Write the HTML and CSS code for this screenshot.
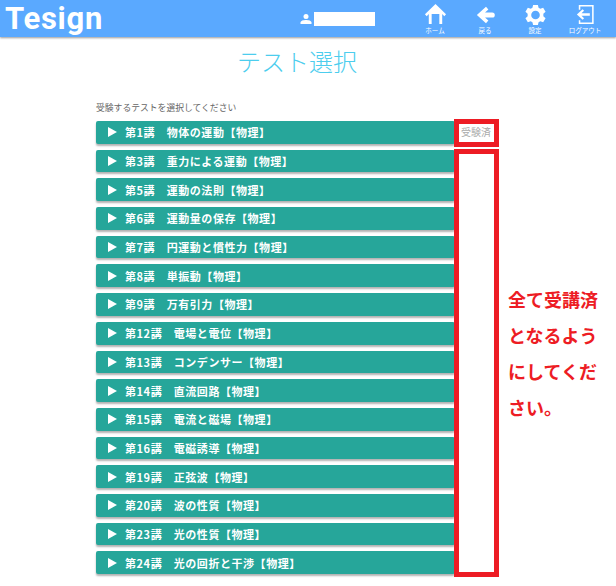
FILE: index.html
```html
<!DOCTYPE html>
<html lang="ja">
<head>
<meta charset="utf-8">
<title>テスト選択</title>
<link rel="stylesheet" href="styles.css">
</head>
<body>
<header class="topbar">
  <div class="logo">Tesign</div>
  <div class="user">
    <svg class="user-icon" viewBox="0 0 12 10"><circle cx="6" cy="2.6" r="2.5"/><path d="M0.5 10V8.6C0.5 6.8 3.5 6 6 6s5.500.8 5.500 2.600V10z"/></svg>
    <span class="user-name"></span>
  </div>
  <nav class="nav">
    <a class="nav-item">
      <svg class="nav-icon" viewBox="0 0 24 24"><path fill-rule="evenodd" d="M12 1 1 11.800 2.800 13.700 5 11.600V22H19V11.600L21.200 13.700 23 11.800ZM8 11.500H16V22H8Z"/></svg>
      <span>ホーム</span>
    </a>
    <a class="nav-item">
      <svg class="nav-icon" viewBox="0 0 24 24"><path d="M12.500 4 3 12.500 12.500 21 15 18.200 11.500 15.200H19A2.700 2.700 0 0 0 19 9.800H11.500L15 6.800Z"/></svg>
      <span>戻る</span>
    </a>
    <a class="nav-item">
      <svg class="nav-icon" viewBox="0 0 24 24"><path transform="translate(0 .5)" fill-rule="evenodd" d="M9.500 1.500H14.500L15.200 4.500 17 5.500 20 4.500 22.500 8.700 20.200 10.800V13.200L22.500 15.300 20 19.500 17 18.500 15.200 19.500 14.500 22.500H9.500L8.800 19.500 7 18.500 4 19.500 1.500 15.300 3.800 13.200V10.800L1.500 8.700 4 4.500 7 5.500 8.800 4.500ZM12 7.500A4.500 4.500 0 1 0 12 16.500 4.500 4.500 0 1 0 12 7.500Z"/></svg>
      <span>設定</span>
    </a>
    <a class="nav-item">
      <svg class="nav-icon" viewBox="0 0 24 24"><path d="M5 2H20.500V22H5V18H6.600V20.400H18.900V3.600H6.600V7H5Z"/><path d="M9 6.500 3 12 9 17.500 10.500 15.800 7.800 13.300H16.500V10.700H7.800L10.500 8.200Z"/></svg>
      <span>ログアウト</span>
    </a>
  </nav>
</header>

<main class="content">
  <h1 class="title">テスト選択</h1>
  <p class="lead">受験するテストを選択してください</p>
  <ul class="tests">
    <li class="test"><div class="bar"><i class="arrow"></i>第1講　物体の運動【物理】</div><span class="status">受験済</span></li>
    <li class="test"><div class="bar"><i class="arrow"></i>第3講　重力による運動【物理】</div></li>
    <li class="test"><div class="bar"><i class="arrow"></i>第5講　運動の法則【物理】</div></li>
    <li class="test"><div class="bar"><i class="arrow"></i>第6講　運動量の保存【物理】</div></li>
    <li class="test"><div class="bar"><i class="arrow"></i>第7講　円運動と慣性力【物理】</div></li>
    <li class="test"><div class="bar"><i class="arrow"></i>第8講　単振動【物理】</div></li>
    <li class="test"><div class="bar"><i class="arrow"></i>第9講　万有引力【物理】</div></li>
    <li class="test"><div class="bar"><i class="arrow"></i>第12講　電場と電位【物理】</div></li>
    <li class="test"><div class="bar"><i class="arrow"></i>第13講　コンデンサー【物理】</div></li>
    <li class="test"><div class="bar"><i class="arrow"></i>第14講　直流回路【物理】</div></li>
    <li class="test"><div class="bar"><i class="arrow"></i>第15講　電流と磁場【物理】</div></li>
    <li class="test"><div class="bar"><i class="arrow"></i>第16講　電磁誘導【物理】</div></li>
    <li class="test"><div class="bar"><i class="arrow"></i>第19講　正弦波【物理】</div></li>
    <li class="test"><div class="bar"><i class="arrow"></i>第20講　波の性質【物理】</div></li>
    <li class="test"><div class="bar"><i class="arrow"></i>第23講　光の性質【物理】</div></li>
    <li class="test"><div class="bar"><i class="arrow"></i>第24講　光の回折と干渉【物理】</div></li>
  </ul>
</main>

<div class="mark mark-first"></div>
<div class="mark mark-rest"></div>
<p class="note">全て受講済となるようにしてください。</p>
</body>
</html>
```

FILE: styles.css
```css
* { box-sizing: border-box; }
html, body { margin: 0; padding: 0; }
body {
  position: relative;
  height: 586px;
  overflow: hidden;
  background: #fff;
  font-family: "Noto Sans CJK JP", "Noto Sans", sans-serif;
}
.topbar {
  display: flex;
  align-items: center;
  height: 37px;
  background: #5aa9ff;
  box-shadow: 0 1px 2px rgba(0, 0, 0, .4);
  color: #fff;
}
.logo {
  margin-left: 5px;
  width: 295px;
  font: 700 31px/35px Roboto, sans-serif;
  letter-spacing: .7px;
}
.user {
  display: flex;
  align-items: center;
  gap: 2px;
  width: 110px;
}
.user-icon { width: 12px; height: 10px; fill: #fff; }
.user-name { width: 61px; height: 14px; background: #fff; }
.nav { display: flex; }
.nav-item {
  display: flex;
  flex-direction: column;
  align-items: center;
  width: 50px;
  height: 37px;
  padding-top: 3px;
}
.nav-icon { width: 23px; height: 23px; fill: #fff; flex: none; }
.nav-item span {
  font-size: 6.5px;
  line-height: 9px;
  margin-top: 0;
  white-space: nowrap;
}
.content { padding-left: 96px; }
.title {
  margin: 7px 0 0;
  padding-right: 118px;
  text-align: center;
  font-size: 24px;
  font-weight: 300;
  line-height: 34px;
  color: #4ccdee;
}
.lead {
  margin: 23px 0 0;
  font-size: 8.8px;
  line-height: 13px;
  color: #666;
}
.tests {
  list-style: none;
  margin: 7px 0 0;
  padding: 0;
}
.test {
  display: flex;
  align-items: center;
  height: 22.7px;
  margin-bottom: 6px;
}
.bar {
  display: flex;
  align-items: center;
  width: 359px;
  height: 100%;
  padding-left: 12px;
  background: #26a69a;
  border-radius: 2px;
  box-shadow: 0 2px 2px rgba(0, 0, 0, .3);
  color: #fff;
  font-size: 11px;
  font-weight: 700;
  letter-spacing: .55px;
  white-space: nowrap;
}
.arrow {
  width: 0;
  height: 0;
  margin-right: 8px;
  border-style: solid;
  border-width: 5px 0 5px 9px;
  border-color: transparent transparent transparent #fff;
}
.status {
  margin-left: 6px;
  font-size: 10px;
  line-height: 22px;
  color: #aaa;
}
.mark {
  position: absolute;
  left: 454px;
  width: 45px;
  border: 5px solid #ed1c24;
}
.mark-first { top: 119px; height: 28px; }
.mark-rest { top: 149px; height: 428px; }
.note {
  position: absolute;
  left: 508px;
  top: 281px;
  width: 92px;
  margin: 0;
  font-size: 18px;
  font-weight: 700;
  line-height: 36px;
  color: #ed1c24;
}
```
